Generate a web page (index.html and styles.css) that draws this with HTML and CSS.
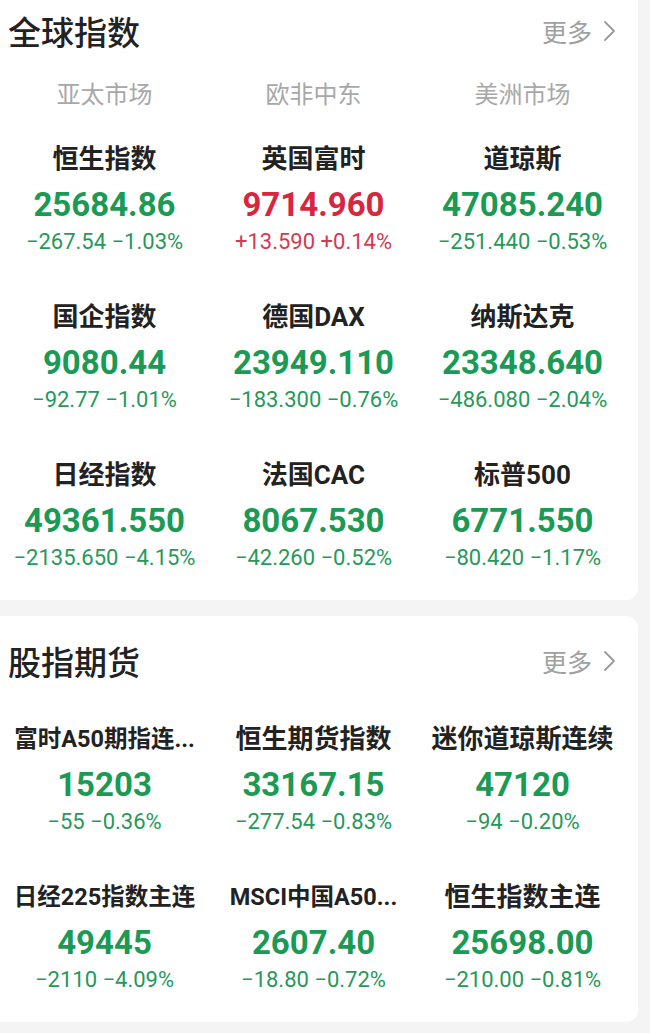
FILE: index.html
```html
<!DOCTYPE html>
<html lang="zh-CN">
<head>
    <meta charset="UTF-8">
    <meta name="viewport" content="width=device-width, initial-scale=1.0">
    <title>全球指数</title>
    <link rel="stylesheet" href="styles.css">
</head>
<body>
    <!-- 全球指数 -->
    <section class="card card-first">
        <div class="card-head">
            <h2 class="card-title">全球指数</h2>
            <a class="more">更多<svg class="chev" viewBox="0 0 14 22" width="14" height="22"><path d="M3 2 L12 11 L3 20" fill="none" stroke="#9a9a9a" stroke-width="1.8" stroke-linecap="round" stroke-linejoin="round"/></svg></a>
        </div>
        <div class="tabs">
            <span>亚太市场</span>
            <span>欧非中东</span>
            <span>美洲市场</span>
        </div>
        <div class="grid">
            <div class="item"><div class="name">恒生指数</div><div class="value down">25684.86</div><div class="change down">−267.54 −1.03%</div></div>
            <div class="item"><div class="name">英国富时</div><div class="value up">9714.960</div><div class="change up">+13.590 +0.14%</div></div>
            <div class="item"><div class="name">道琼斯</div><div class="value down">47085.240</div><div class="change down">−251.440 −0.53%</div></div>

            <div class="item"><div class="name">国企指数</div><div class="value down">9080.44</div><div class="change down">−92.77 −1.01%</div></div>
            <div class="item"><div class="name">德国DAX</div><div class="value down">23949.110</div><div class="change down">−183.300 −0.76%</div></div>
            <div class="item"><div class="name">纳斯达克</div><div class="value down">23348.640</div><div class="change down">−486.080 −2.04%</div></div>

            <div class="item"><div class="name">日经指数</div><div class="value down">49361.550</div><div class="change down">−2135.650 −4.15%</div></div>
            <div class="item"><div class="name">法国CAC</div><div class="value down">8067.530</div><div class="change down">−42.260 −0.52%</div></div>
            <div class="item"><div class="name">标普500</div><div class="value down">6771.550</div><div class="change down">−80.420 −1.17%</div></div>
        </div>
    </section>

    <!-- 股指期货 -->
    <section class="card">
        <div class="card-head">
            <h2 class="card-title">股指期货</h2>
            <a class="more">更多<svg class="chev" viewBox="0 0 14 22" width="14" height="22"><path d="M3 2 L12 11 L3 20" fill="none" stroke="#9a9a9a" stroke-width="1.8" stroke-linecap="round" stroke-linejoin="round"/></svg></a>
        </div>
        <div class="grid">
            <div class="item"><div class="name small">富时A50期指连...</div><div class="value down">15203</div><div class="change down">−55 −0.36%</div></div>
            <div class="item"><div class="name">恒生期货指数</div><div class="value down">33167.15</div><div class="change down">−277.54 −0.83%</div></div>
            <div class="item"><div class="name">迷你道琼斯连续</div><div class="value down">47120</div><div class="change down">−94 −0.20%</div></div>

            <div class="item"><div class="name small">日经225指数主连</div><div class="value down">49445</div><div class="change down">−2110 −4.09%</div></div>
            <div class="item"><div class="name small">MSCI中国A50...</div><div class="value down">2607.40</div><div class="change down">−18.80 −0.72%</div></div>
            <div class="item"><div class="name">恒生指数主连</div><div class="value down">25698.00</div><div class="change down">−210.00 −0.81%</div></div>
        </div>
    </section>
</body>
</html>
```

FILE: styles.css
```css
body {
    margin: 0;
    background: #f4f4f4;
    font-family: Roboto, "Noto Sans CJK SC", sans-serif;
    color: #222;
    overflow: hidden;
}
.card {
    width: 638px;
    background: #fff;
    border-radius: 0 12px 12px 0;
    margin-bottom: 16px;
}
.card-first {
    margin-top: -14px;
}
.card-head {
    height: 90px;
    display: flex;
    align-items: center;
    justify-content: space-between;
    padding: 0 22px 0 8px;
}
.card-title {
    margin: 0;
    font-family: "Noto Sans CJK SC", sans-serif;
    font-size: 33px;
    font-weight: 500;
    color: #222;
}
.more {
    display: flex;
    align-items: center;
    gap: 10px;
    font-family: "Noto Sans CJK SC", sans-serif;
    font-size: 25px;
    color: #a0a0a0;
}
.tabs {
    display: grid;
    grid-template-columns: repeat(3, 209px);
    height: 34px;
    line-height: 34px;
    margin-bottom: 16px;
    text-align: center;
    font-family: "Noto Sans CJK SC", sans-serif;
    font-size: 24px;
    color: #a8a8a8;
}
.grid {
    display: grid;
    grid-template-columns: repeat(3, 209px);
}
.item {
    height: 158px;
    padding-top: 15px;
    box-sizing: border-box;
    text-align: center;
    white-space: nowrap;
}
.name {
    height: 36px;
    line-height: 36px;
    font-family: Roboto, "Noto Sans CJK SC", sans-serif;
    font-size: 26px;
    font-weight: 700;
    color: #222;
}
.name.small {
    font-size: 23.5px;
}
.value {
    height: 40px;
    line-height: 40px;
    margin-top: 8px;
    font-size: 33px;
    font-weight: 700;
}
.change {
    height: 34px;
    line-height: 34px;
    font-size: 22px;
}
.down { color: #1a9a54; }
.change.down { color: #26995a; }
.up { color: #d9263f; }
.change.up { color: #d43a50; }
```
